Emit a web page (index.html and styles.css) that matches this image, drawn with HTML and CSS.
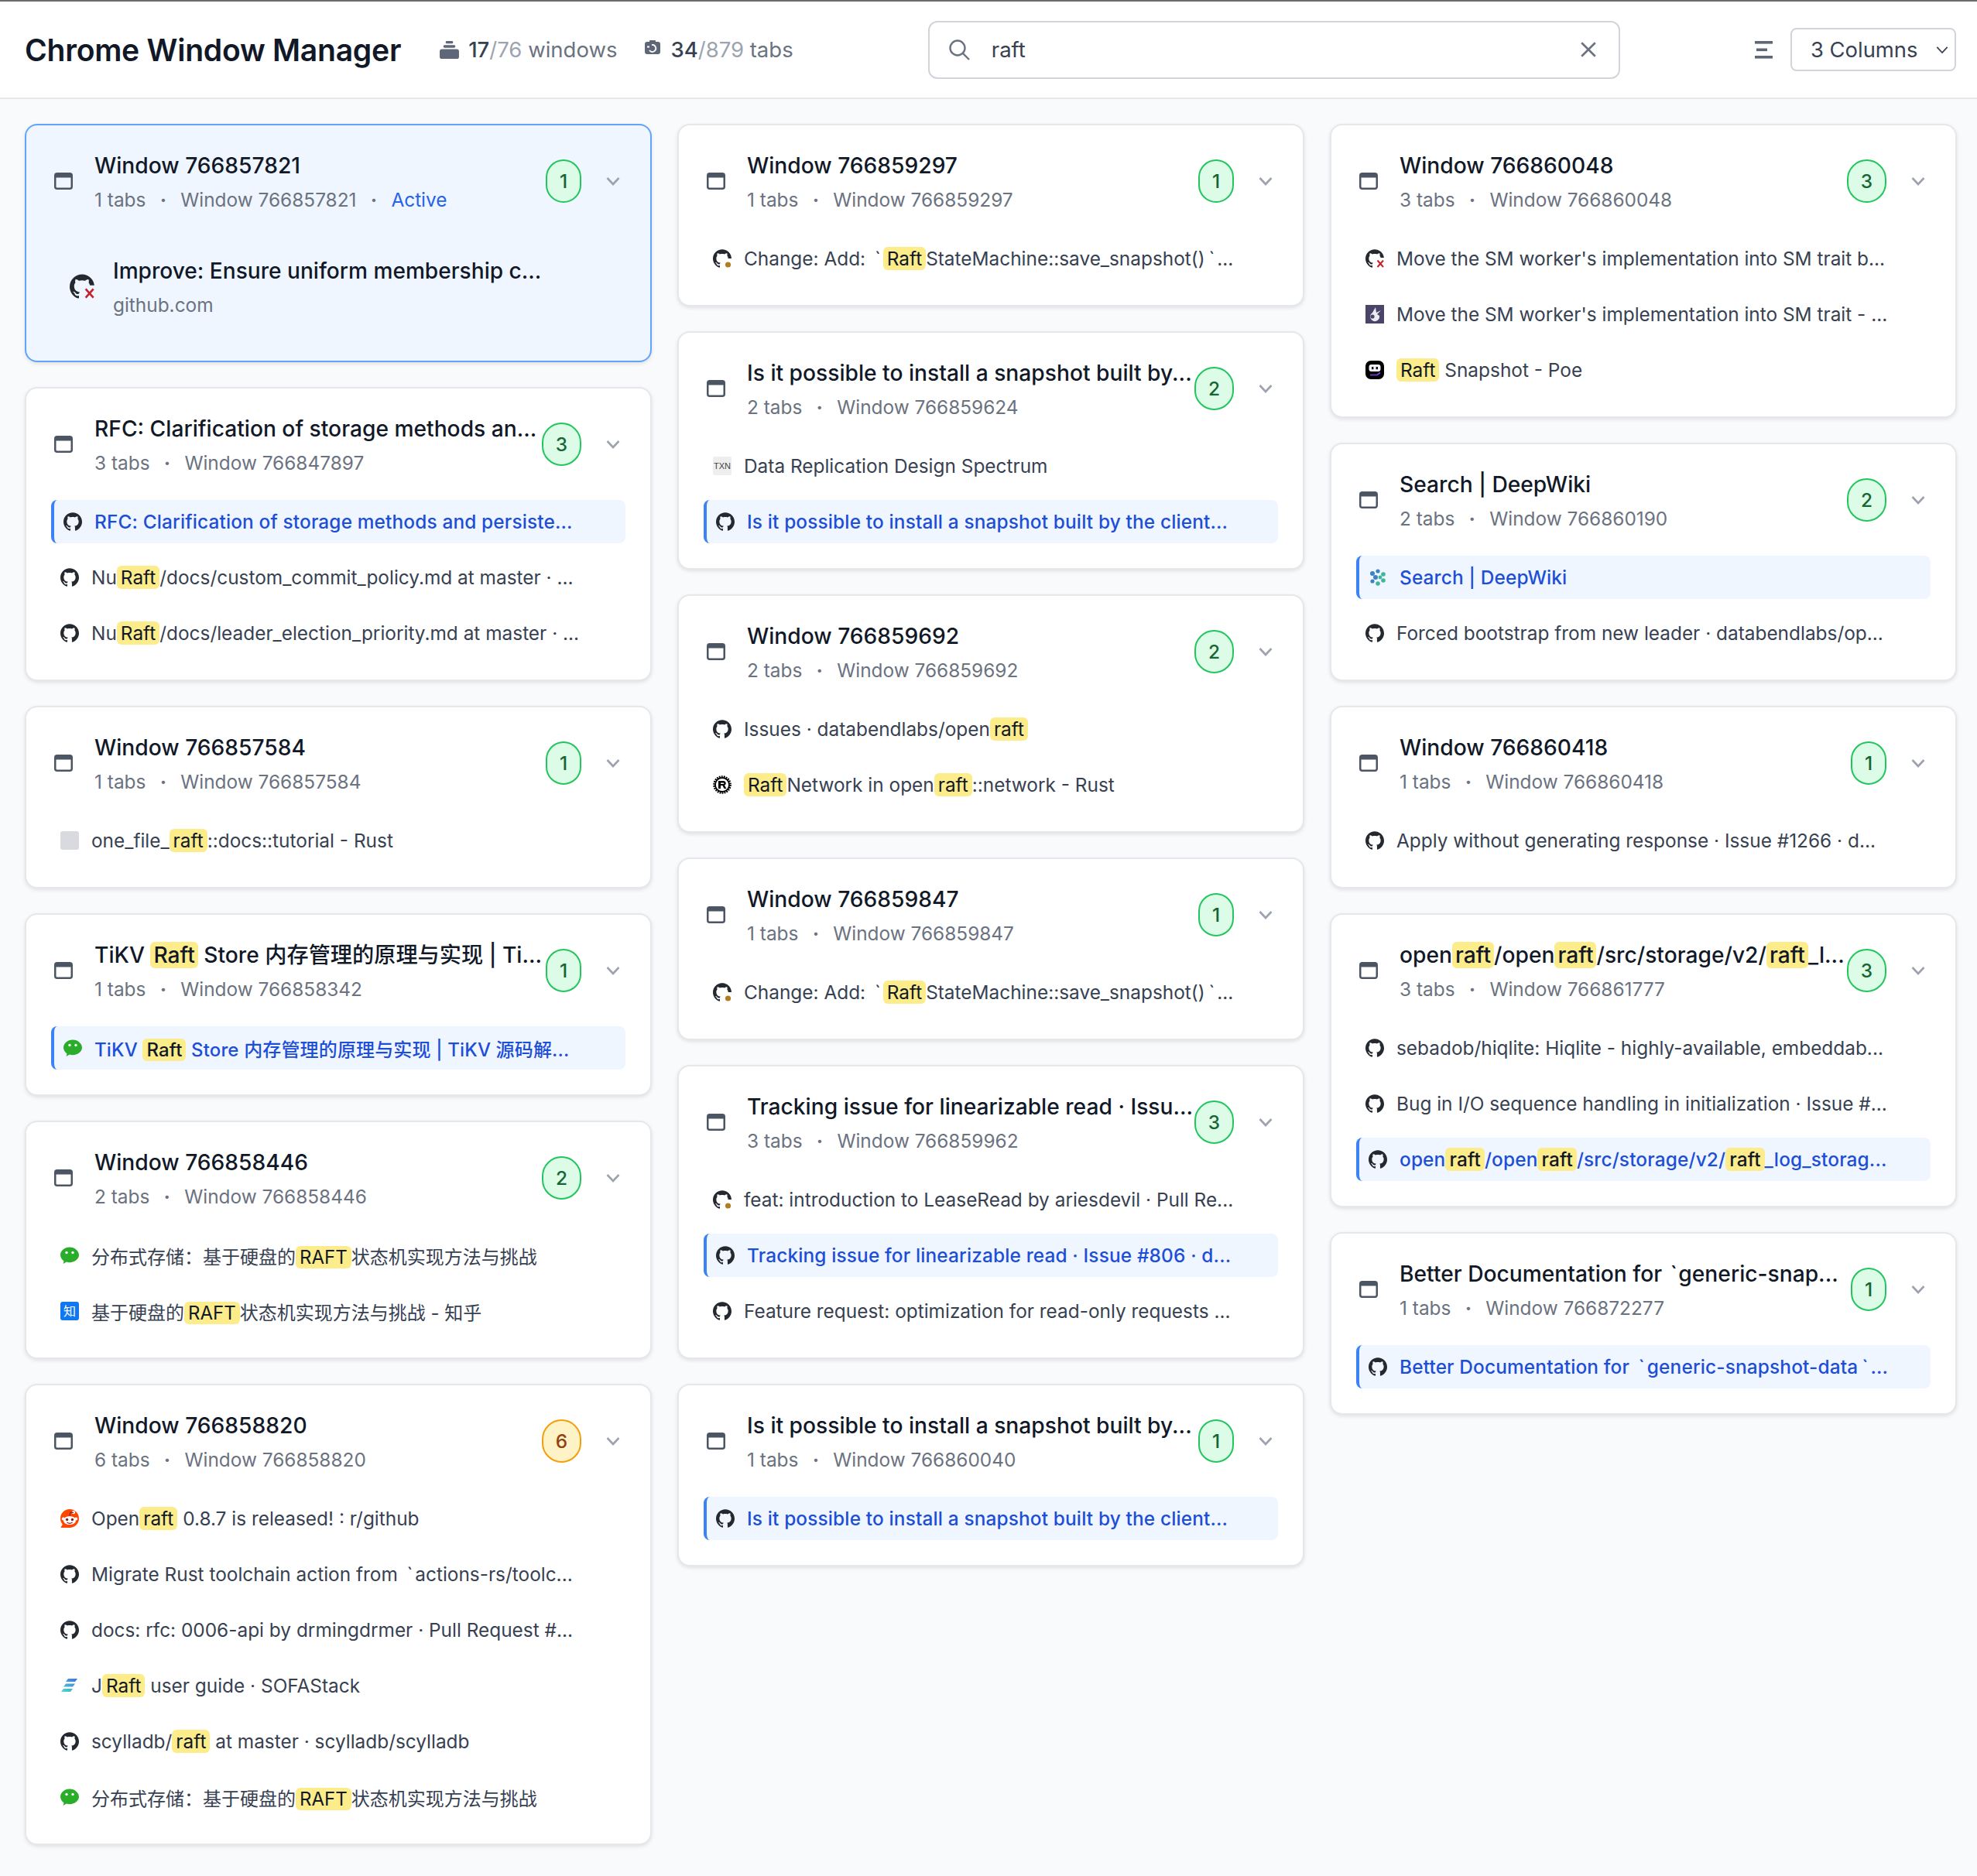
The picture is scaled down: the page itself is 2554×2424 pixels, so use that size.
FILE: index.html
```html
<!DOCTYPE html>
<html lang="en">

<head>
  <meta charset="UTF-8">
  <title>Chrome Window Manager</title>
  <link rel="stylesheet" href="styles.css">
</head>

<body>

  <!-- 共用圖示 -->
  <svg class="sprite" xmlns="http://www.w3.org/2000/svg">
    <symbol id="i-window" viewBox="0 0 24 22">
      <rect x="1.25" y="1.25" width="21.5" height="19.5" rx="2.5" fill="none" stroke="currentColor" stroke-width="2.5" />
      <rect x="1" y="1" width="22" height="5.5" fill="currentColor" />
    </symbol>
    <symbol id="i-chevron" viewBox="0 0 18 12">
      <path d="M1.5 2 9 10l7.5-8" fill="none" stroke="currentColor" stroke-width="2.6" />
    </symbol>
    <symbol id="i-github" viewBox="0 0 24 24">
      <path fill="#24292f" d="M12 .297c-6.63 0-12 5.373-12 12 0 5.303 3.438 9.8 8.205 11.385.6.113.82-.258.82-.577 0-.285-.01-1.04-.015-2.04-3.338.724-4.042-1.61-4.042-1.61C4.422 18.07 3.633 17.7 3.633 17.7c-1.087-.744.084-.729.084-.729 1.205.084 1.838 1.236 1.838 1.236 1.07 1.835 2.809 1.305 3.495.998.108-.776.417-1.305.76-1.605-2.665-.3-5.466-1.332-5.466-5.93 0-1.31.465-2.38 1.235-3.22-.135-.303-.54-1.523.105-3.176 0 0 1.005-.322 3.3 1.23.96-.267 1.98-.399 3-.405 1.02.006 2.04.138 3 .405 2.28-1.552 3.285-1.23 3.285-1.23.645 1.653.24 2.873.12 3.176.765.84 1.23 1.91 1.23 3.22 0 4.61-2.805 5.625-5.475 5.92.42.36.81 1.096.81 2.22 0 1.606-.015 2.896-.015 3.286 0 .315.21.69.825.57C20.565 22.092 24 17.592 24 12.297c0-6.627-5.373-12-12-12" />
    </symbol>
    <symbol id="i-github-x" viewBox="0 0 24 24">
      <use href="#i-github" />
      <path fill="var(--hole, #fff)" d="M13 11h11v13H13z" />
      <path d="M15.5 14.5l7.5 8.5m0-8.5L15.5 23" fill="none" stroke="#c5222b" stroke-width="2" />
    </symbol>
    <symbol id="i-github-dot" viewBox="0 0 24 24">
      <use href="#i-github" />
      <path fill="#fff" d="M14 12h10v12H14z" />
      <circle cx="19.5" cy="20" r="3.6" fill="#b07d23" />
    </symbol>
    <symbol id="i-wechat" viewBox="0 0 24 24">
      <path fill="#2aae2a" d="M12 1.5C5.4 1.5 0 6 0 11.6c0 3.2 1.8 6 4.5 7.8L3.6 23l4.3-2.400c1.300.4 2.700.6 4.100.6 6.600 0 12-4.500 12-9.600S18.600 1.500 12 1.500z" />
      <circle cx="8" cy="8.500" r="1.700" fill="#fff" />
      <circle cx="16" cy="8.500" r="1.700" fill="#fff" />
    </symbol>
    <symbol id="i-reddit" viewBox="0 0 24 24">
      <path fill="#ff4500" d="M12 0C5.400 0 0 5.400 0 12c0 3 1.100 5.700 2.900 7.800L.8 23c-.3.500 0 1 .6 1H12c6.600 0 12-5.400 12-12S18.600 0 12 0z" />
      <ellipse cx="12" cy="14.500" rx="8" ry="5.600" fill="#fff" />
      <circle cx="3.800" cy="12.500" r="2" fill="#fff" />
      <circle cx="20.200" cy="12.500" r="2" fill="#fff" />
      <circle cx="8.600" cy="13.500" r="1.700" fill="#842123" />
      <circle cx="15.400" cy="13.500" r="1.700" fill="#842123" />
      <path d="M8.500 17c2 1.500 5 1.500 7 0" fill="none" stroke="#842123" stroke-width="1.200" />
      <circle cx="17" cy="4.200" r="2.100" fill="#fff" />
      <path d="M12 9l1-5 4 .4" fill="none" stroke="#842123" stroke-width="1.200" />
    </symbol>
    <symbol id="i-sofa" viewBox="0 0 24 24">
      <defs>
        <linearGradient id="sofa-grad" x1="0" y1="1" x2="1" y2="0">
          <stop offset="0" stop-color="#4fe0c0" />
          <stop offset="1" stop-color="#3d6cf0" />
        </linearGradient>
      </defs>
      <path fill="url(#sofa-grad)" d="M10 3h12l-3 4H7zM7 9.500h12l-3 4H4zM4 16h12l-3 4H1z" />
    </symbol>
    <symbol id="i-deepwiki" viewBox="0 0 24 24">
      <g fill="#3b82c4">
        <circle cx="5" cy="7" r="3" />
        <circle cx="12" cy="4" r="2.600" />
        <circle cx="9" cy="12" r="3" />
        <circle cx="5" cy="17" r="2.600" />
      </g>
      <g fill="#41b59a">
        <circle cx="19" cy="8" r="2.800" />
        <circle cx="15" cy="12" r="2.400" />
        <circle cx="19" cy="16" r="2.800" />
        <circle cx="12" cy="20" r="2.800" />
      </g>
    </symbol>
    <symbol id="i-poe" viewBox="0 0 24 24">
      <rect width="24" height="24" rx="7" fill="#000" />
      <rect x="4.500" y="5" width="15" height="9" rx="3" fill="#f4f2fb" />
      <rect x="8" y="8" width="2.400" height="3.200" fill="#000" />
      <rect x="13.600" y="8" width="2.400" height="3.200" fill="#000" />
      <path d="M6 18.500h9l4-3" fill="none" stroke="#8b3fe0" stroke-width="1.700" />
    </symbol>
    <symbol id="i-rust" viewBox="0 0 24 24">
      <circle cx="12" cy="12" r="10.500" fill="none" stroke="#000" stroke-width="2.600" stroke-dasharray="1.800 1.200" />
      <circle cx="12" cy="12" r="9" fill="none" stroke="#000" stroke-width="1.800" />
      <path d="M7 7h7a3 3 0 0 1 1 5.700l2.500 4.300h-3l-2-4H10v4H7zM10 9.400v1.700h3.500a.85.85 0 0 0 0-1.700z" fill="#000" />
    </symbol>
    <symbol id="i-bunny" viewBox="0 0 24 24">
      <rect width="24" height="24" fill="#4a4468" />
      <path d="M13 3l-4 7a6 6 0 1 0 9 4l-3-2 5-5-6 3z" fill="#eceaf2" />
      <circle cx="9" cy="15" r="2.600" fill="#4a4468" />
    </symbol>
  </svg>

  <header class="topbar">
    <div class="topbar-left">
      <h1 class="app-title">Chrome Window Manager</h1>
      <div class="stat">
        <svg class="stat-icon-stack" viewBox="0 0 26 24">
          <rect x="8" y="0" width="10" height="3.500" rx="1.500" fill="currentColor" />
          <rect x="5" y="5.500" width="16" height="3.500" rx="1.500" fill="currentColor" />
          <rect x="0" y="11" width="26" height="13" rx="3" fill="currentColor" />
        </svg>
        <span><b>17</b><i>/76</i> windows</span>
      </div>
      <div class="stat stat-tabs">
        <svg class="stat-icon-tabs" viewBox="0 0 20 18">
          <rect x="0" y="2" width="20" height="16" rx="3" fill="currentColor" />
          <rect x="6" y="0" width="8" height="3" rx="1" fill="currentColor" />
          <path d="M3 8.500h3M9 6a4.500 4.500 0 1 1-3 7" fill="none" stroke="#fff" stroke-width="1.800" />
        </svg>
        <span><b>34</b><i>/879</i> tabs</span>
      </div>
    </div>

    <div class="search-box">
      <svg class="search-icon" viewBox="0 0 28 28">
        <circle cx="12" cy="12" r="9.500" fill="none" stroke="currentColor" stroke-width="2.400" />
        <path d="M19 19l8 8" stroke="currentColor" stroke-width="2.400" />
      </svg>
      <span class="search-value">raft</span>
      <svg class="search-clear" viewBox="0 0 20 20">
        <path d="M2 2l16 16M18 2L2 18" stroke="currentColor" stroke-width="2.400" />
      </svg>
    </div>

    <div class="topbar-right">
      <svg class="layout-icon" viewBox="0 0 24 24">
        <rect x="0" y="1" width="23" height="3.600" fill="currentColor" />
        <rect x="2" y="10.500" width="14" height="3.600" fill="currentColor" />
        <rect x="0" y="20" width="23" height="3.600" fill="currentColor" />
      </svg>
      <div class="column-select">
        <span>3 Columns</span>
        <svg class="select-chevron" viewBox="0 0 18 12">
          <path d="M1.500 2 9 10l7.500-8" fill="none" stroke="currentColor" stroke-width="2" />
        </svg>
      </div>
    </div>
  </header>

  <main class="board">

    <!-- 第一欄 -->
    <div class="column">
      <section class="card card-current">
        <div class="card-head">
          <svg class="win-icon"><use href="#i-window" /></svg>
          <div class="card-info">
            <div class="card-title">Window 766857821</div>
            <div class="card-sub"><span>1 tabs</span><em>•</em><span>Window 766857821</span><em>•</em><span class="tag-active">Active</span></div>
          </div>
          <span class="count">1</span>
          <svg class="chevron"><use href="#i-chevron" /></svg>
        </div>
        <div class="tab-big">
          <svg class="fav-big"><use href="#i-github-x" /></svg>
          <div>
            <div class="tab-big-title">Improve: Ensure uniform membership c...</div>
            <div class="tab-big-url">github.com</div>
          </div>
        </div>
      </section>

      <section class="card">
        <div class="card-head">
          <svg class="win-icon"><use href="#i-window" /></svg>
          <div class="card-info">
            <div class="card-title">RFC: Clarification of storage methods an...</div>
            <div class="card-sub"><span>3 tabs</span><em>•</em><span>Window 766847897</span></div>
          </div>
          <span class="count">3</span>
          <svg class="chevron"><use href="#i-chevron" /></svg>
        </div>
        <div class="tabs">
          <div class="tab tab-active"><svg class="fav"><use href="#i-github" /></svg><span>RFC: Clarification of storage methods and persiste...</span></div>
          <div class="tab"><svg class="fav"><use href="#i-github" /></svg><span>Nu<mark>Raft</mark>/docs/custom_commit_policy.md at master · ...</span></div>
          <div class="tab"><svg class="fav"><use href="#i-github" /></svg><span>Nu<mark>Raft</mark>/docs/leader_election_priority.md at master · ...</span></div>
        </div>
      </section>

      <section class="card">
        <div class="card-head">
          <svg class="win-icon"><use href="#i-window" /></svg>
          <div class="card-info">
            <div class="card-title">Window 766857584</div>
            <div class="card-sub"><span>1 tabs</span><em>•</em><span>Window 766857584</span></div>
          </div>
          <span class="count">1</span>
          <svg class="chevron"><use href="#i-chevron" /></svg>
        </div>
        <div class="tabs">
          <div class="tab"><span class="fav fav-blank"></span><span>one_file_<mark>raft</mark>::docs::tutorial - Rust</span></div>
        </div>
      </section>

      <section class="card">
        <div class="card-head">
          <svg class="win-icon"><use href="#i-window" /></svg>
          <div class="card-info">
            <div class="card-title">TiKV <mark>Raft</mark> Store 内存管理的原理与实现 | Ti...</div>
            <div class="card-sub"><span>1 tabs</span><em>•</em><span>Window 766858342</span></div>
          </div>
          <span class="count">1</span>
          <svg class="chevron"><use href="#i-chevron" /></svg>
        </div>
        <div class="tabs">
          <div class="tab tab-active tab-cjk"><svg class="fav"><use href="#i-wechat" /></svg><span>TiKV <mark>Raft</mark> Store 内存管理的原理与实现 | TiKV 源码解...</span></div>
        </div>
      </section>

      <section class="card">
        <div class="card-head">
          <svg class="win-icon"><use href="#i-window" /></svg>
          <div class="card-info">
            <div class="card-title">Window 766858446</div>
            <div class="card-sub"><span>2 tabs</span><em>•</em><span>Window 766858446</span></div>
          </div>
          <span class="count">2</span>
          <svg class="chevron"><use href="#i-chevron" /></svg>
        </div>
        <div class="tabs">
          <div class="tab tab-cjk"><svg class="fav"><use href="#i-wechat" /></svg><span>分布式存储：基于硬盘的<mark>RAFT</mark>状态机实现方法与挑战</span></div>
          <div class="tab tab-cjk"><span class="fav fav-zhihu">知</span><span>基于硬盘的<mark>RAFT</mark>状态机实现方法与挑战 - 知乎</span></div>
        </div>
      </section>

      <section class="card">
        <div class="card-head">
          <svg class="win-icon"><use href="#i-window" /></svg>
          <div class="card-info">
            <div class="card-title">Window 766858820</div>
            <div class="card-sub"><span>6 tabs</span><em>•</em><span>Window 766858820</span></div>
          </div>
          <span class="count count-many">6</span>
          <svg class="chevron"><use href="#i-chevron" /></svg>
        </div>
        <div class="tabs">
          <div class="tab"><svg class="fav"><use href="#i-reddit" /></svg><span>Open<mark>raft</mark> 0.8.7 is released! : r/github</span></div>
          <div class="tab"><svg class="fav"><use href="#i-github" /></svg><span>Migrate Rust toolchain action from <span class="tick">`</span>actions-rs/toolc...</span></div>
          <div class="tab"><svg class="fav"><use href="#i-github" /></svg><span>docs: rfc: 0006-api by drmingdrmer · Pull Request #...</span></div>
          <div class="tab"><svg class="fav"><use href="#i-sofa" /></svg><span>J<mark>Raft</mark> user guide · SOFAStack</span></div>
          <div class="tab"><svg class="fav"><use href="#i-github" /></svg><span>scylladb/<mark>raft</mark> at master · scylladb/scylladb</span></div>
          <div class="tab tab-cjk"><svg class="fav"><use href="#i-wechat" /></svg><span>分布式存储：基于硬盘的<mark>RAFT</mark>状态机实现方法与挑战</span></div>
        </div>
      </section>
    </div>

    <!-- 第二欄 -->
    <div class="column">
      <section class="card">
        <div class="card-head">
          <svg class="win-icon"><use href="#i-window" /></svg>
          <div class="card-info">
            <div class="card-title">Window 766859297</div>
            <div class="card-sub"><span>1 tabs</span><em>•</em><span>Window 766859297</span></div>
          </div>
          <span class="count">1</span>
          <svg class="chevron"><use href="#i-chevron" /></svg>
        </div>
        <div class="tabs">
          <div class="tab"><svg class="fav"><use href="#i-github-dot" /></svg><span>Change: Add: <span class="tick">`</span><mark>Raft</mark>StateMachine::save_snapshot()<span class="tick">`</span>...</span></div>
        </div>
      </section>

      <section class="card">
        <div class="card-head">
          <svg class="win-icon"><use href="#i-window" /></svg>
          <div class="card-info">
            <div class="card-title">Is it possible to install a snapshot built by...</div>
            <div class="card-sub"><span>2 tabs</span><em>•</em><span>Window 766859624</span></div>
          </div>
          <span class="count">2</span>
          <svg class="chevron"><use href="#i-chevron" /></svg>
        </div>
        <div class="tabs">
          <div class="tab"><span class="fav fav-txn">TXN</span><span>Data Replication Design Spectrum</span></div>
          <div class="tab tab-active"><svg class="fav"><use href="#i-github" /></svg><span>Is it possible to install a snapshot built by the client...</span></div>
        </div>
      </section>

      <section class="card">
        <div class="card-head">
          <svg class="win-icon"><use href="#i-window" /></svg>
          <div class="card-info">
            <div class="card-title">Window 766859692</div>
            <div class="card-sub"><span>2 tabs</span><em>•</em><span>Window 766859692</span></div>
          </div>
          <span class="count">2</span>
          <svg class="chevron"><use href="#i-chevron" /></svg>
        </div>
        <div class="tabs">
          <div class="tab"><svg class="fav"><use href="#i-github" /></svg><span>Issues · databendlabs/open<mark>raft</mark></span></div>
          <div class="tab"><svg class="fav"><use href="#i-rust" /></svg><span><mark>Raft</mark>Network in open<mark>raft</mark>::network - Rust</span></div>
        </div>
      </section>

      <section class="card">
        <div class="card-head">
          <svg class="win-icon"><use href="#i-window" /></svg>
          <div class="card-info">
            <div class="card-title">Window 766859847</div>
            <div class="card-sub"><span>1 tabs</span><em>•</em><span>Window 766859847</span></div>
          </div>
          <span class="count">1</span>
          <svg class="chevron"><use href="#i-chevron" /></svg>
        </div>
        <div class="tabs">
          <div class="tab"><svg class="fav"><use href="#i-github-dot" /></svg><span>Change: Add: <span class="tick">`</span><mark>Raft</mark>StateMachine::save_snapshot()<span class="tick">`</span>...</span></div>
        </div>
      </section>

      <section class="card">
        <div class="card-head">
          <svg class="win-icon"><use href="#i-window" /></svg>
          <div class="card-info">
            <div class="card-title">Tracking issue for linearizable read · Issu...</div>
            <div class="card-sub"><span>3 tabs</span><em>•</em><span>Window 766859962</span></div>
          </div>
          <span class="count">3</span>
          <svg class="chevron"><use href="#i-chevron" /></svg>
        </div>
        <div class="tabs">
          <div class="tab"><svg class="fav"><use href="#i-github-dot" /></svg><span>feat: introduction to LeaseRead by ariesdevil · Pull Re...</span></div>
          <div class="tab tab-active"><svg class="fav"><use href="#i-github" /></svg><span>Tracking issue for linearizable read · Issue #806 · d...</span></div>
          <div class="tab"><svg class="fav"><use href="#i-github" /></svg><span>Feature request: optimization for read-only requests ...</span></div>
        </div>
      </section>

      <section class="card">
        <div class="card-head">
          <svg class="win-icon"><use href="#i-window" /></svg>
          <div class="card-info">
            <div class="card-title">Is it possible to install a snapshot built by...</div>
            <div class="card-sub"><span>1 tabs</span><em>•</em><span>Window 766860040</span></div>
          </div>
          <span class="count">1</span>
          <svg class="chevron"><use href="#i-chevron" /></svg>
        </div>
        <div class="tabs">
          <div class="tab tab-active"><svg class="fav"><use href="#i-github" /></svg><span>Is it possible to install a snapshot built by the client...</span></div>
        </div>
      </section>
    </div>

    <!-- 第三欄 -->
    <div class="column">
      <section class="card">
        <div class="card-head">
          <svg class="win-icon"><use href="#i-window" /></svg>
          <div class="card-info">
            <div class="card-title">Window 766860048</div>
            <div class="card-sub"><span>3 tabs</span><em>•</em><span>Window 766860048</span></div>
          </div>
          <span class="count">3</span>
          <svg class="chevron"><use href="#i-chevron" /></svg>
        </div>
        <div class="tabs">
          <div class="tab"><svg class="fav"><use href="#i-github-x" /></svg><span>Move the SM worker's implementation into SM trait b...</span></div>
          <div class="tab"><svg class="fav"><use href="#i-bunny" /></svg><span>Move the SM worker's implementation into SM trait - ...</span></div>
          <div class="tab"><svg class="fav"><use href="#i-poe" /></svg><span><mark>Raft</mark> Snapshot - Poe</span></div>
        </div>
      </section>

      <section class="card">
        <div class="card-head">
          <svg class="win-icon"><use href="#i-window" /></svg>
          <div class="card-info">
            <div class="card-title">Search | DeepWiki</div>
            <div class="card-sub"><span>2 tabs</span><em>•</em><span>Window 766860190</span></div>
          </div>
          <span class="count">2</span>
          <svg class="chevron"><use href="#i-chevron" /></svg>
        </div>
        <div class="tabs">
          <div class="tab tab-active"><svg class="fav"><use href="#i-deepwiki" /></svg><span>Search | DeepWiki</span></div>
          <div class="tab"><svg class="fav"><use href="#i-github" /></svg><span>Forced bootstrap from new leader · databendlabs/op...</span></div>
        </div>
      </section>

      <section class="card">
        <div class="card-head">
          <svg class="win-icon"><use href="#i-window" /></svg>
          <div class="card-info">
            <div class="card-title">Window 766860418</div>
            <div class="card-sub"><span>1 tabs</span><em>•</em><span>Window 766860418</span></div>
          </div>
          <span class="count">1</span>
          <svg class="chevron"><use href="#i-chevron" /></svg>
        </div>
        <div class="tabs">
          <div class="tab"><svg class="fav"><use href="#i-github" /></svg><span>Apply without generating response · Issue #1266 · d...</span></div>
        </div>
      </section>

      <section class="card">
        <div class="card-head">
          <svg class="win-icon"><use href="#i-window" /></svg>
          <div class="card-info">
            <div class="card-title">open<mark>raft</mark>/open<mark>raft</mark>/src/storage/v2/<mark>raft</mark>_l...</div>
            <div class="card-sub"><span>3 tabs</span><em>•</em><span>Window 766861777</span></div>
          </div>
          <span class="count">3</span>
          <svg class="chevron"><use href="#i-chevron" /></svg>
        </div>
        <div class="tabs">
          <div class="tab"><svg class="fav"><use href="#i-github" /></svg><span>sebadob/hiqlite: Hiqlite - highly-available, embeddab...</span></div>
          <div class="tab"><svg class="fav"><use href="#i-github" /></svg><span>Bug in I/O sequence handling in initialization · Issue #...</span></div>
          <div class="tab tab-active"><svg class="fav"><use href="#i-github" /></svg><span>open<mark>raft</mark>/open<mark>raft</mark>/src/storage/v2/<mark>raft</mark>_log_storag...</span></div>
        </div>
      </section>

      <section class="card">
        <div class="card-head">
          <svg class="win-icon"><use href="#i-window" /></svg>
          <div class="card-info">
            <div class="card-title">Better Documentation for <span class="tick">`</span>generic-snap...</div>
            <div class="card-sub"><span>1 tabs</span><em>•</em><span>Window 766872277</span></div>
          </div>
          <span class="count">1</span>
          <svg class="chevron"><use href="#i-chevron" /></svg>
        </div>
        <div class="tabs">
          <div class="tab tab-active"><svg class="fav"><use href="#i-github" /></svg><span>Better Documentation for <span class="tick">`</span>generic-snapshot-data<span class="tick">`</span>...</span></div>
        </div>
      </section>
    </div>

  </main>

</body>

</html>
```

FILE: styles.css
```css
body {
  margin: 0;
  background: #f9fafb;
  font-family: Inter, "Noto Sans CJK SC", sans-serif;
  color: #111827;
}

.sprite {
  position: absolute;
  width: 0;
  height: 0;
}

/* 頂部列 */
.topbar {
  display: flex;
  align-items: center;
  justify-content: space-between;
  height: 124px;
  padding: 0 27px 0 32px;
  background: white;
  border-top: 2px solid #6b6b6b;
  border-bottom: 2px solid #e5e7eb;
}

.topbar-left {
  display: flex;
  align-items: center;
}

.app-title {
  margin: 0 50px 0 0;
  font-size: 39.1px;
  font-weight: 600;
  letter-spacing: -0.25px;
  color: #111827;
}

.stat {
  display: flex;
  align-items: center;
  gap: 12px;
  font-size: 27.5px;
  color: #6b7280;
}

.stat b {
  font-weight: 500;
  color: #374151;
}

.stat i {
  font-style: normal;
  color: #9ca3af;
}

.stat-tabs {
  margin-left: 36px;
  gap: 13px;
}

.stat-icon-stack {
  width: 25px;
  height: 23px;
  color: #5f6677;
}

.stat-icon-tabs {
  width: 20px;
  height: 18px;
  margin-top: -6px;
  color: #5f6677;
}

.search-box {
  display: flex;
  align-items: center;
  box-sizing: border-box;
  width: 894px;
  height: 75px;
  padding: 0 28px 0 24px;
  border: 2px solid #d1d5db;
  border-radius: 12px;
  font-size: 27.5px;
  color: #374151;
}

.search-icon {
  width: 28px;
  height: 28px;
  color: #6b7280;
}

.search-value {
  flex: 1;
  margin-left: 28px;
}

.search-clear {
  width: 22px;
  height: 22px;
  color: #6b7280;
}

.topbar-right {
  display: flex;
  align-items: center;
  gap: 22px;
}

.layout-icon {
  width: 24px;
  height: 24px;
  color: #5f6677;
}

.column-select {
  display: flex;
  align-items: center;
  justify-content: space-between;
  box-sizing: border-box;
  width: 214px;
  height: 56px;
  padding: 0 8px 0 24px;
  border: 2px solid #d1d5db;
  border-radius: 8px;
  font-size: 27.4px;
  color: #374151;
}

.select-chevron {
  width: 16px;
  height: 11px;
  color: #374151;
}

/* 視窗欄位 */
.board {
  display: grid;
  grid-template-columns: repeat(3, 1fr);
  gap: 33px;
  align-items: start;
  padding: 32px 26px 32px 32px;
}

.column {
  display: flex;
  flex-direction: column;
  gap: 32px;
  min-width: 0;
}

.card {
  box-sizing: border-box;
  padding: 0 32px 32px;
  background: white;
  border: 2px solid #e5e7eb;
  border-radius: 16px;
  box-shadow: 0 2px 5px rgba(0, 0, 0, 0.1);
}

.card-current {
  --hole: #eff6ff;
  background: #eff6ff;
  border-color: #60a5fa;
}

.card-head {
  display: flex;
  align-items: center;
  height: 82px;
  padding: 31px 7px 31px 4px;
}

.win-icon {
  flex: none;
  width: 24px;
  height: 22px;
  margin-right: 28px;
  color: #4b5563;
}

.card-info {
  flex: 1;
  min-width: 0;
  white-space: nowrap;
}

.card-title {
  height: 42px;
  font-size: 28.2px;
  font-weight: 500;
  line-height: 42px;
  color: #111827;
}

.card-title mark {
  padding: 0 4px;
}

.card-title .tick {
  padding: 0 0.05em 0 0.1em;
}

.card-sub {
  display: flex;
  align-items: center;
  gap: 18.5px;
  height: 36px;
  margin-top: 5px;
  font-size: 24.4px;
  line-height: 36px;
  color: #6b7280;
}

.card-sub em {
  font-size: 14px;
  font-style: normal;
}

.tag-active {
  color: #2563eb;
}

.count {
  flex: none;
  box-sizing: border-box;
  height: 56px;
  padding: 0 16px;
  background: #dcfce7;
  border: 2px solid #22c55e;
  border-radius: 28px;
  font-size: 24.4px;
  font-weight: 500;
  line-height: 52px;
  color: #166534;
}

.count-many {
  background: #fef3c7;
  border-color: #f59e0b;
  color: #92400e;
}

.chevron {
  flex: none;
  width: 18px;
  height: 12px;
  margin-left: 32px;
  color: #9ca3af;
}

/* 分頁列 */
.tabs {
  display: flex;
  flex-direction: column;
  gap: 16px;
}

.tab {
  display: flex;
  align-items: center;
  gap: 16px;
  height: 56px;
  padding-left: 12px;
  border-radius: 8px;
  font-size: 24.4px;
  color: #374151;
  white-space: nowrap;
}

.tab-cjk {
  font-size: 24px;
}

.tab-active {
  background: #eff6ff;
  border-left: 4px solid #3b82f6;
  font-weight: 500;
  letter-spacing: 0.15px;
  color: #1d4ed8;
}

.fav {
  flex: none;
  width: 24px;
  height: 24px;
}

.fav-blank {
  background: #d9dadf;
  border-radius: 3px;
}

.fav-zhihu {
  background: #0f78f0;
  border-radius: 3px;
  font-size: 16px;
  line-height: 24px;
  text-align: center;
  color: white;
}

.fav-txn {
  background: #eeeeee;
  border-radius: 2px;
  font-family: "Liberation Sans", sans-serif;
  font-size: 11px;
  line-height: 24px;
  text-align: center;
  color: #444444;
}

mark {
  padding: 0 5px;
  background: #fdec8a;
  border-radius: 6px;
  color: #111827;
}

.tick {
  padding: 0 0.12em 0 0.2em;
}

.tab-big {
  display: flex;
  align-items: center;
  gap: 24px;
  height: 128px;
  padding-left: 24px;
}

.fav-big {
  flex: none;
  width: 32px;
  height: 32px;
}

.tab-big-title {
  font-size: 28.1px;
  font-weight: 500;
  line-height: 42px;
  color: #111827;
}

.tab-big-url {
  margin-top: 5px;
  font-size: 24.4px;
  line-height: 36px;
  color: #6b7280;
}
```
